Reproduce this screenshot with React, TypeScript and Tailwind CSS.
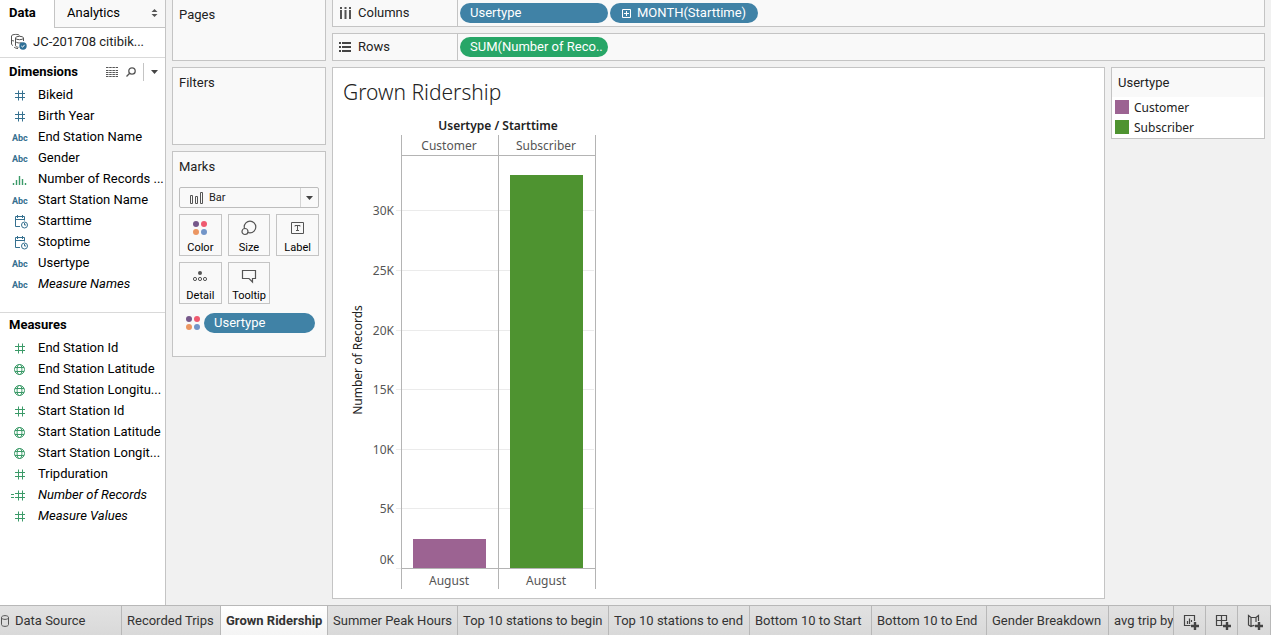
import React from "react";

type IconName = "hash" | "abc" | "bars" | "date" | "globe" | "calcHash";
type Field = { name: string; icon: IconName; italic?: boolean };

const dimensions: Field[] = [
  { name: "Bikeid", icon: "hash" },
  { name: "Birth Year", icon: "hash" },
  { name: "End Station Name", icon: "abc" },
  { name: "Gender", icon: "abc" },
  { name: "Number of Records ...", icon: "bars" },
  { name: "Start Station Name", icon: "abc" },
  { name: "Starttime", icon: "date" },
  { name: "Stoptime", icon: "date" },
  { name: "Usertype", icon: "abc" },
  { name: "Measure Names", icon: "abc", italic: true },
];

const measures: Field[] = [
  { name: "End Station Id", icon: "hash" },
  { name: "End Station Latitude", icon: "globe" },
  { name: "End Station Longitu...", icon: "globe" },
  { name: "Start Station Id", icon: "hash" },
  { name: "Start Station Latitude", icon: "globe" },
  { name: "Start Station Longit...", icon: "globe" },
  { name: "Tripduration", icon: "hash" },
  { name: "Number of Records", icon: "calcHash", italic: true },
  { name: "Measure Values", icon: "hash", italic: true },
];

const tabs = [
  { name: "Recorded Trips", width: "w-[99px]" },
  { name: "Grown Ridership", width: "w-[107px]", active: true },
  { name: "Summer Peak Hours", width: "w-[130px]" },
  { name: "Top 10 stations to begin", width: "w-[151px]" },
  { name: "Top 10 stations to end", width: "w-[141px]" },
  { name: "Bottom 10 to Start", width: "w-[122px]" },
  { name: "Bottom 10 to End", width: "w-[115px]" },
  { name: "Gender Breakdown", width: "w-[122px]" },
];

function FieldIcon({ icon }: { icon: IconName }) {
  if (icon === "abc") {
    return (
      <span className="w-5 shrink-0 pl-0.5 pt-0.5 text-[9px] font-bold leading-3">Abc</span>
    );
  }
  return (
    <svg width="20" height="16" viewBox="0 0 20 16" fill="none" stroke="currentColor" className="shrink-0" aria-hidden="true">
      {(icon === "hash" || icon === "calcHash") && (
        <path d="M5 6.5h10M5 10.5h10M8.5 3.5v10M12.5 3.5v10" />
      )}
      {icon === "calcHash" && <path d="M1 7.5h3M1 10.5h3" />}
      {icon === "bars" && (
        <path d="M3.5 12v2M6.5 9v5M9.5 5v9M12.5 8v6M15.5 12v2" strokeWidth="1.4" />
      )}
      {icon === "date" && (
        <>
          <path d="M10 13.5H5.5v-10h9v4M5.5 6.5h9M7.5 2v3M12.5 2v3" />
          <circle cx="14.5" cy="12" r="3" />
          <path d="M14.5 10v2H16" />
        </>
      )}
      {icon === "globe" && (
        <>
          <circle cx="9.5" cy="8.5" r="5" />
          <ellipse cx="9.5" cy="8.5" rx="2.4" ry="5" />
          <path d="M5 6.5h9M5 10.5h9" />
        </>
      )}
    </svg>
  );
}

function FieldList({ fields, tone }: { fields: Field[]; tone: "blue" | "green" }) {
  return (
    <ul>
      {fields.map((f) => (
        <li key={f.name} className="flex h-[21px] items-center gap-2 pl-2.5">
          <span className={tone === "green" || f.icon === "bars" ? "flex text-[#3b9a68]" : "flex text-[#35708f]"}>
            <FieldIcon icon={f.icon} />
          </span>
          <span className={f.italic ? "whitespace-nowrap italic" : "whitespace-nowrap"}>{f.name}</span>
        </li>
      ))}
    </ul>
  );
}

function ColorDots() {
  return (
    <svg width="16" height="16" viewBox="0 0 16 16" aria-hidden="true">
      <circle cx="4" cy="4" r="3" fill="#76588a" />
      <circle cx="12" cy="4" r="3" fill="#ef5a70" />
      <circle cx="4" cy="12" r="3" fill="#eb9662" />
      <circle cx="12" cy="12" r="3" fill="#7295c8" />
    </svg>
  );
}

function MarkButton({ label, children }: { label: string; children: React.ReactNode }) {
  return (
    <button className="flex h-[42px] flex-col items-center justify-between border border-[#c4c4c4] bg-[#f9f9f9] pb-px pt-[5px] text-[11px] leading-3 text-black">
      {children}
      <span className="leading-3">{label}</span>
    </button>
  );
}

function Sidebar() {
  return (
    <aside className="flex w-[166px] shrink-0 flex-col border-r border-[#c4c4c4] bg-white text-black">
      <div className="flex h-7">
        <button className="w-[54px] pb-0.5 pl-[9px] text-left font-bold">Data</button>
        <button className="flex flex-1 items-center justify-between border-b border-l border-[#c4c4c4] bg-[#f9f9f9] pb-0.5 pl-3 pr-[7px]">
          Analytics
          <svg width="7" height="8" viewBox="0 0 7 8" fill="#555" aria-hidden="true">
            <path d="M3.5 0 6.5 3h-6zM3.5 8l3-3h-6z" />
          </svg>
        </button>
      </div>
      <div className="flex h-[30px] items-center gap-1.5 border-b border-[#d9d9d9] pb-0.5 pl-2.5 text-[#222]">
        <svg width="17" height="17" viewBox="0 0 17 17" fill="none" stroke="#555" aria-hidden="true">
          <path d="M3 12.5C1.8 12 1.5 11.5 1.5 11V3C1.5 1 9.5 1 9.5 2.5M1.5 6.500c0 .8 1 1.3 2.5 1.5" />
          <ellipse cx="9.5" cy="5" rx="4" ry="1.7" />
          <path d="M5.5 5v7.5c0 1 1.5 1.7 3 1.8M13.5 5v3M5.5 8.500c1 1.5 4 1.8 6 1.2M8 15.5c-1.5 0-3-.5-4-1.5" />
          <circle cx="13" cy="13" r="3.7" fill="#2f7097" stroke="none" />
          <path d="m11.3 13 1.3 1.2 2-2.4" stroke="#fff" />
        </svg>
        <span className="whitespace-nowrap">JC-201708 citibik...</span>
      </div>
      <section className="h-[254px]">
        <div className="flex h-[26px] items-center pl-[9px] pt-px">
          <h2 className="flex-1 font-bold">Dimensions</h2>
          <button aria-label="View data" className="mr-2">
            <svg width="12" height="10" viewBox="0 0 12 10" stroke="#555" aria-hidden="true">
              <path d="M0 .5h12M0 3.5h12M0 5.5h12M0 7.5h12M0 9.5h12" strokeDasharray="2.5 .7" />
            </svg>
          </button>
          <button aria-label="Find field" className="mr-[7px]">
            <svg width="10" height="10" viewBox="0 0 10 10" fill="none" stroke="#555" strokeWidth="1.3" aria-hidden="true">
              <circle cx="6" cy="4" r="3.2" />
              <path d="M3.7 6.300.5 9.5" />
            </svg>
          </button>
          <button aria-label="Field options" className="flex h-[18px] items-center border-l border-[#c4c4c4] pl-[7px] pr-[7px]">
            <svg width="7" height="4" viewBox="0 0 7 4" fill="#444" aria-hidden="true">
              <path d="M0 0h7L3.5 4z" />
            </svg>
          </button>
        </div>
        <FieldList fields={dimensions} tone="blue" />
      </section>
      <section className="border-t border-[#d9d9d9]">
        <h2 className="pl-[9px] font-bold leading-6">Measures</h2>
        <FieldList fields={measures} tone="green" />
      </section>
    </aside>
  );
}

function Shelves() {
  return (
    <div className="flex w-[154px] shrink-0 flex-col gap-1.5 text-[#222]">
      <section className="h-[61px] border border-t-0 border-[#c4c4c4] bg-[#f9f9f9] px-1.5 pt-[7px]">
        <h2>Pages</h2>
      </section>
      <section className="h-[78px] border border-[#c4c4c4] bg-[#f9f9f9] px-1.5 pt-[7px]">
        <h2>Filters</h2>
      </section>
      <section className="h-[206px] border border-[#c4c4c4] bg-[#f9f9f9] px-1.5 pt-[7px]">
        <h2>Marks</h2>
        <button aria-label="Mark type: Bar" className="mt-3 flex h-[21px] w-full items-center rounded-[2px] border border-[#bdbdbd] pl-2.5 text-[11px]">
          <svg width="13" height="12" viewBox="0 0 13 12" fill="none" stroke="#555" aria-hidden="true">
            <path d="M.5 3.5h2v8h-2zM5.5 4.5h2v7h-2zM10.5.5h2v11h-2z" />
          </svg>
          <span className="flex-1 pl-1.5 text-left">Bar</span>
          <span className="flex h-full w-[18px] items-center justify-center border-l border-[#d4d4d4]">
            <svg width="7" height="4" viewBox="0 0 7 4" fill="#444" aria-hidden="true">
              <path d="M0 0h7L3.5 4z" />
            </svg>
          </span>
        </button>
        <div className="mt-1.5 grid grid-cols-3 gap-1.5">
          <MarkButton label="Color"><ColorDots /></MarkButton>
          <MarkButton label="Size">
            <svg width="16" height="16" viewBox="0 0 16 16" fill="none" stroke="#555" strokeWidth="1.2" aria-hidden="true">
              <circle cx="9" cy="7" r="5.8" />
              <circle cx="4" cy="11.5" r="3" fill="#f9f9f9" />
            </svg>
          </MarkButton>
          <MarkButton label="Label">
            <svg width="16" height="16" viewBox="0 0 16 16" fill="none" stroke="#555" aria-hidden="true">
              <path d="M1.5 2.5h12v11h-12zM5 6.500v-1h5v1M7.5 5.5v5M6 10.5h3" />
            </svg>
          </MarkButton>
          <MarkButton label="Detail">
            <svg width="16" height="16" viewBox="0 0 16 16" fill="none" stroke="#555" aria-hidden="true">
              <circle cx="8" cy="5" r="2" fill="#555" stroke="none" />
              <circle cx="3" cy="11" r="1.6" />
              <circle cx="8" cy="11" r="1.6" />
              <circle cx="13" cy="11" r="1.6" />
            </svg>
          </MarkButton>
          <MarkButton label="Tooltip">
            <svg width="16" height="16" viewBox="0 0 16 16" fill="none" stroke="#555" strokeWidth="1.2" aria-hidden="true">
              <path d="M1.5 2.5h13v8h-3v3.5L8 10.5H1.5z" />
            </svg>
          </MarkButton>
        </div>
        <div className="mt-[9px] flex items-center gap-[3px] pl-1.5 pr-1">
          <ColorDots />
          <button className="h-5 flex-1 rounded-full bg-[#4082a6] pl-2.5 text-left text-white">Usertype</button>
        </div>
      </section>
    </div>
  );
}

const ticks = [
  { label: "30K", y: 75 },
  { label: "25K", y: 135 },
  { label: "20K", y: 195 },
  { label: "15K", y: 254 },
  { label: "10K", y: 314 },
  { label: "5K", y: 373 },
];

function Chart() {
  return (
    <svg
      width="256"
      height="480"
      viewBox="0 0 256 480"
      role="img"
      aria-label="Number of Records by Usertype and Starttime"
      className="font-['Noto_Sans',sans-serif] text-[12px]"
      fill="#555"
    >
      <text x="158" y="15" textAnchor="middle" fontWeight="600" fill="#222">Usertype / Starttime</text>
      <g transform="translate(0 20)">
        <g shapeRendering="crispEdges">
          {ticks.map((t) => (
            <rect key={t.label} x="56" y={t.y} width="198" height="1" fill="#ebebeb" />
          ))}
          <rect x="56" y="433" width="5" height="1" fill="#ebebeb" />
          <rect x="73" y="404" width="73" height="29" fill="#9c6392" />
          <rect x="170" y="40" width="73" height="393" fill="#4e9330" />
          <path d="M61.5 0v454M158.5 0v454M255.5 0v454M61 20.5h195M61 433.5h195" stroke="#b4b4b4" />
        </g>
        <text x="109" y="15" textAnchor="middle">Customer</text>
        <text x="206" y="15" textAnchor="middle">Subscriber</text>
        <text x="109" y="450" textAnchor="middle">August</text>
        <text x="206" y="450" textAnchor="middle">August</text>
        {ticks.map((t) => (
          <text key={t.label} x="54" y={t.y + 5} textAnchor="end">{t.label}</text>
        ))}
        <text x="54" y="429" textAnchor="end">0K</text>
        <text transform="translate(22 225) rotate(-90)" textAnchor="middle" fill="#222">Number of Records</text>
      </g>
    </svg>
  );
}

function Workspace() {
  return (
    <main className="flex min-w-0 flex-1 flex-col gap-1.5 text-[#222]">
      <div className="flex h-[27px] border border-t-0 border-[#c4c4c4] bg-[#f9f9f9]">
        <div className="flex w-[125px] items-center gap-[7px] border-r border-[#c4c4c4] pl-1.5">
          <svg width="12" height="12" viewBox="0 0 12 12" stroke="#555" strokeWidth="2" aria-hidden="true">
            <path d="M2 0v2M2 3v9M6.500 0v2M6.500 3v9M11 0v2M11 3v9" />
          </svg>
          Columns
        </div>
        <div className="flex items-center gap-0.5 pl-0.5">
          <button className="h-5 w-[148px] rounded-full bg-[#4082a6] pl-2.5 text-left text-white">Usertype</button>
          <button className="flex h-5 w-[148px] items-center gap-1.5 rounded-full bg-[#4082a6] pl-3 text-left text-white">
            <svg width="9" height="9" viewBox="0 0 9 9" fill="none" stroke="#fff" aria-hidden="true">
              <path d="M.5.5h8v8h-8zM2 4.5h5M4.5 2v5" />
            </svg>
            MONTH(Starttime)
          </button>
        </div>
      </div>
      <div className="flex h-7 border border-[#c4c4c4] bg-[#f9f9f9]">
        <div className="flex w-[125px] items-center gap-[7px] border-r border-[#c4c4c4] pl-1.5">
          <svg width="12" height="12" viewBox="0 0 12 12" stroke="#444" strokeWidth="2" aria-hidden="true">
            <path d="M0 2h2M3 2h9M0 6h2M3 6h9M0 10h2M3 10h9" />
          </svg>
          Rows
        </div>
        <div className="flex items-center pl-0.5">
          <button className="h-5 w-[148px] whitespace-nowrap rounded-full bg-[#27a667] pl-2.5 text-left text-white">SUM(Number of Reco..</button>
        </div>
      </div>
      <div className="flex flex-1 items-start gap-1.5">
        <section className="flex-1 self-stretch border border-[#c4c4c4] bg-white">
          <h1 className="pl-2.5 pt-2.5 font-['Noto_Sans',sans-serif] text-[21px] leading-7 font-light">Grown Ridership</h1>
          <div className="flex pl-[7px] pt-[9px]">
            <Chart />
          </div>
        </section>
        <section className="h-[72px] w-[154px] border border-[#c4c4c4] bg-white">
          <h2 className="h-[29px] bg-[#f9f9f9] pl-1.5 leading-[29px]">Usertype</h2>
          <ul className="flex flex-col pl-[3px] font-['Noto_Sans',sans-serif] text-[12px]">
            <li className="flex h-5 items-center gap-[5px]">
              <span className="size-3.5 bg-[#9c6392]" />
              <span className="pt-0.5">Customer</span>
            </li>
            <li className="flex h-5 items-center gap-[5px]">
              <span className="size-3.5 bg-[#4e9330]" />
              <span className="pt-0.5">Subscriber</span>
            </li>
          </ul>
        </section>
      </div>
    </main>
  );
}

function SheetTabs() {
  return (
    <nav className="flex h-[30px] border-t border-[#b8b8b8] bg-linear-to-b from-[#e2e2e2] to-[#d9d9d9] text-[#333]">
      <button className="flex w-[122px] shrink-0 items-center gap-[5px] border-r border-[#b8b8b8]">
        <svg width="10" height="12" viewBox="0 0 10 12" fill="none" stroke="#555" aria-hidden="true">
          <path d="M1.5 2.5v7C1.5 12 8.5 12 8.5 9.500v-7C8.5 0 1.5 0 1.5 2.5s7 2.5 7 0" />
        </svg>
        Data Source
      </button>
      {tabs.map((t) => (
        <button
          key={t.name}
          className={`${t.width} shrink-0 whitespace-nowrap border-r border-[#b8b8b8] pl-[5px] text-left ${t.active ? "bg-linear-to-b from-white to-[#f4f4f4] font-bold" : ""}`}
        >
          {t.name}
        </button>
      ))}
      <button className="min-w-0 flex-1 overflow-hidden whitespace-nowrap border-r border-[#b8b8b8] pl-[5px] text-left">avg trip by</button>
      <button aria-label="New worksheet" className="flex w-8 shrink-0 items-center justify-center border-r border-[#b8b8b8] pl-0.5 pt-0.5">
        <svg width="16" height="16" viewBox="0 0 16 16" fill="none" stroke="#444" strokeWidth="1.2" aria-hidden="true">
          <path d="M7.500 11.5H1.5v-10h10V7M4.5 7v3M6.5 4.5V10M8.500 6v2" />
          <path d="M12 8v8M8 12h8" strokeWidth="2.400" />
        </svg>
      </button>
      <button aria-label="New dashboard" className="flex w-8 shrink-0 items-center justify-center border-r border-[#b8b8b8] pl-0.5 pt-0.5">
        <svg width="16" height="16" viewBox="0 0 16 16" fill="none" stroke="#444" strokeWidth="1.2" aria-hidden="true">
          <path d="M7.500 11.5H1.5v-10h10V7M6.500 1.5v10M1.5 6.500h10" />
          <path d="M12 8v8M8 12h8" strokeWidth="2.400" />
        </svg>
      </button>
      <button aria-label="New story" className="flex w-[33px] shrink-0 items-center justify-center border-r border-[#b8b8b8] pl-0.5 pt-0.5">
        <svg width="16" height="16" viewBox="0 0 16 16" fill="none" stroke="#444" strokeWidth="1.2" aria-hidden="true">
          <path d="M7.500 12 6.500 11.500 4 12.500 1.5 11V1.500L4 3.500h5l2.500-2V7M4 3.500v9M9 3.500V8" />
          <path d="M12 8v8M8 12h8" strokeWidth="2.400" />
        </svg>
      </button>
    </nav>
  );
}

export default function App() {
  return (
    <div className="flex min-h-screen flex-col bg-[#f1f1f1] font-[Roboto,sans-serif] text-[13px] leading-4">
      <div className="flex flex-1">
        <Sidebar />
        <div className="flex min-w-0 flex-1 gap-1.5 px-1.5 pb-1.5">
          <Shelves />
          <Workspace />
        </div>
      </div>
      <SheetTabs />
    </div>
  );
}
